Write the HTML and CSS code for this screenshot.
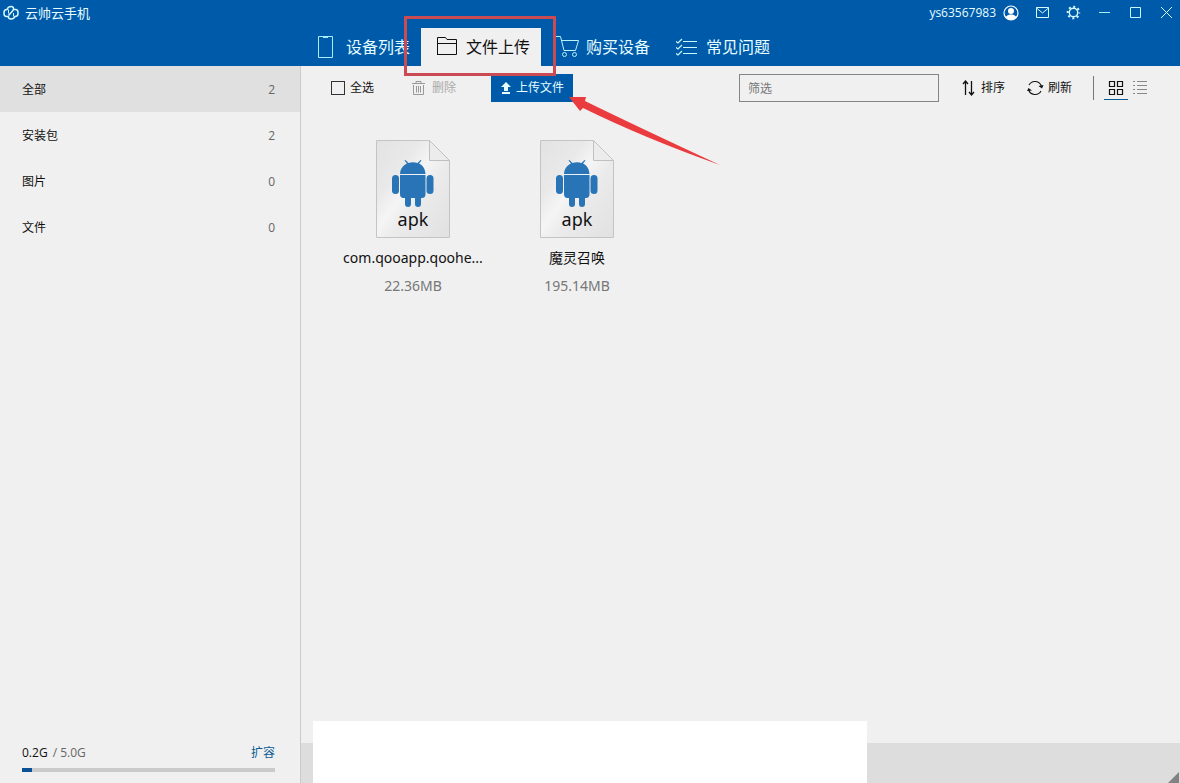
FILE: index.html
```html
<!DOCTYPE html>
<html lang="zh-CN">
<head>
<meta charset="utf-8">
<title>云帅云手机</title>
<link rel="stylesheet" href="styles.css">
</head>
<body>
<svg class="defs" aria-hidden="true">
  <defs>
    <linearGradient id="paper" x1="0" y1="0" x2="1" y2="1">
      <stop offset="0" stop-color="#e3e3e4"/>
      <stop offset="0.3" stop-color="#e9e9ea"/>
      <stop offset="0.46" stop-color="#f5f5f6"/>
      <stop offset="0.6" stop-color="#ebebec"/>
      <stop offset="1" stop-color="#e1e1e2"/>
    </linearGradient>
    <symbol id="apk-file" viewBox="0 0 74 98">
      <path d="M.5.5H53.500L73.500 20.500V97.500H.5Z" fill="url(#paper)" stroke="#c4c4c6"/>
      <path d="M53.500.5V20.500H73.500Z" fill="#ececed" stroke="#c0c0c2"/>
      <g fill="#2874b6">
        <path d="M24 34C24.500 28.500 27 25.500 31 23.500L28.500 20.500L29.500 20L32.500 23Q37 21.500 41.500 23L44.500 20L45.500 20.500L43 23.500C47 25.500 49 28.500 49.500 34Z"/>
        <path d="M24 35H49.500V54Q49.500 58 46 58H45V64Q45 67 42 67T39 64V58H35V64Q35 67 32 67T29 64V58H27.500Q24 58 24 54Z"/>
        <rect x="16" y="35" width="7" height="19" rx="3.500"/>
        <rect x="50.500" y="35" width="7" height="19" rx="3.500"/>
      </g>
    </symbol>
  </defs>
</svg>

<header class="header">
  <div class="titlebar">
    <h1 class="brand">
      <svg class="icon" width="16" height="16" viewBox="0 0 16 16" fill="none" stroke="#d4fbff" stroke-width="1.500">
        <path d="M5.500 11.500H3.500Q1 11.500 1 8.500V7.500Q1 4.500 4 4.500Q5 1.500 8 1.500Q11 1.500 10.500 4.500L9.500 6L5.500 10.500"/>
        <path d="M10.500 4.500H12.500Q15 4.500 15 7.500V8.500Q15 11.500 12 11.500Q11 14 8 14Q5 14 5.500 11"/>
        <path d="M5.500 4.500V8.500M10.500 8V11.500" stroke-width="1"/>
      </svg>
      云帅云手机
    </h1>
    <div class="window-tools">
      <button class="user" type="button">ys63567983
        <svg class="icon" width="16" height="16" viewBox="0 0 16 16">
          <circle cx="8" cy="8" r="7" fill="none" stroke="#fff" stroke-width="1.200"/>
          <circle cx="8" cy="6" r="3" fill="#fff"/>
          <path d="M2.500 12Q4 10 6.500 9.500H9.500Q12 10 13.500 12Q11.500 15 8 15T2.500 12Z" fill="#fff"/>
        </svg>
      </button>
      <button class="tool" type="button" aria-label="消息">
        <svg class="icon" width="15" height="15" viewBox="0 0 15 15" fill="none" stroke="#d4fbff"><path d="M1.500 2.500H13.500V12.500H1.500ZM1.500 3L7.500 8L13.500 3"/></svg>
      </button>
      <button class="tool" type="button" aria-label="设置">
        <svg class="icon" width="15" height="15" viewBox="0 0 15 15" fill="none" stroke="#d4fbff"><circle cx="7.500" cy="7.500" r="4.200" stroke-width="1.400"/><circle cx="7.500" cy="7.500" r="5.800" stroke-width="2" stroke-dasharray="2 2.555" stroke-dashoffset="1"/></svg>
      </button>
      <button class="tool" type="button" aria-label="最小化">
        <svg class="icon" width="15" height="15" viewBox="0 0 15 15" stroke="#a8f0f4"><path d="M2 7.500H13"/></svg>
      </button>
      <button class="tool" type="button" aria-label="最大化">
        <svg class="icon" width="15" height="15" viewBox="0 0 15 15" fill="none" stroke="#c4f8fb"><path d="M2.500 2.500H12.500V12.500H2.500Z"/></svg>
      </button>
      <button class="tool" type="button" aria-label="关闭">
        <svg class="icon" width="15" height="15" viewBox="0 0 15 15" stroke="#d4fbff"><path d="M2 2L13 13M13 2L2 13"/></svg>
      </button>
    </div>
  </div>
  <nav class="tabs">
    <a class="tab" href="#devices">
      <svg class="icon" width="24" height="24" viewBox="0 0 24 24" fill="none" stroke="#a8eef4"><path d="M2.500 1.500H16.500V22.500H2.500Z"/><path d="M7 2.500H12"/></svg>
      设备列表</a>
    <a class="tab tab-active" href="#upload" aria-current="page">
      <svg class="icon" width="24" height="24" viewBox="0 0 24 24" fill="none" stroke="#111"><path d="M1.500 20V2.500H9.500L11 4.500H20.500V19.500H1.500ZM1.500 8.500H20.500"/></svg>
      文件上传
      <span class="highlight-box"></span></a>
    <a class="tab" href="#buy">
      <svg class="icon" width="24" height="24" viewBox="0 0 24 24" fill="none" stroke="#b8f3f8"><path d="M0 1.500H4.500L8 15.500H19.500L22.500 5.500H5.500"/><circle cx="8.500" cy="19.500" r="2"/><circle cx="18.500" cy="19.500" r="2"/></svg>
      购买设备</a>
    <a class="tab" href="#faq">
      <svg class="icon" width="24" height="24" viewBox="0 0 24 24" fill="none" stroke="#c8f8fb"><path d="M7 6.500H21M7 12.500H21M7 18.500H21"/><path stroke-width="1.200" d="M-.5 6L2 8L6 4M-.5 12L2 14L6 10M-.5 18L2 20L6 16"/></svg>
      常见问题</a>
  </nav>
</header>

<div class="body">
  <aside class="sidebar">
    <ul class="categories">
      <li><a class="category category-active" href="#all">全部<span class="count">2</span></a></li>
      <li><a class="category" href="#packages">安装包<span class="count">2</span></a></li>
      <li><a class="category" href="#images">图片<span class="count">0</span></a></li>
      <li><a class="category" href="#files">文件<span class="count">0</span></a></li>
    </ul>
    <div class="storage">
      <div class="storage-row">
        <span class="quota">0.2G <span class="total">/ 5.0G</span></span>
        <a class="expand" href="#expand">扩容</a>
      </div>
      <div class="meter"><div class="meter-fill" style="width:4%"></div></div>
    </div>
  </aside>

  <main class="main">
    <div class="toolbar">
      <label class="select-all"><input class="checkbox" type="checkbox">全选</label>
      <button class="delete" type="button" disabled>
        <svg class="icon" width="15" height="16" viewBox="0 0 15 16" fill="none" stroke="#999"><path d="M1 3.500H14M5 3V1.500H10V3M2.500 5V14.500H12.500V5M5.500 6V12.500M7.500 6V12.500M9.500 6V12.500"/></svg>
        删除</button>
      <div class="upload-wrap">
        <button class="upload" type="button">
          <svg class="icon" width="12" height="12" viewBox="0 0 12 12" fill="#e4fdff"><path d="M6 0L11 5H8V9H4V5H1ZM2 10H10V12H2Z"/></svg>
          上传文件</button>
        <svg class="pointer" width="151" height="70" viewBox="0 0 151 70" fill="#ea3c3f"><path d="M0 0L17 0L16 4Q65 28 151 68Q75 41 14 11L11 14Z"/></svg>
      </div>
      <input class="filter" type="text" placeholder="筛选" aria-label="筛选">
      <button class="sort" type="button">
        <svg class="icon" width="14" height="16" viewBox="0 0 14 16" fill="none" stroke="#111" stroke-width="1.300"><path d="M3.500 15V1M1 4L3.500 1L6 4M9.500 1V15M7 12L9.500 15L12 12"/></svg>
        排序</button>
      <button class="refresh" type="button">
        <svg class="icon" width="17" height="16" viewBox="0 0 17 16" fill="none" stroke="#111" stroke-width="1.100"><path d="M2 5A6.800 6.800 0 0 1 14.500 6.500M14 11A6.800 6.800 0 0 1 1.500 9.500"/><path fill="#111" stroke="none" d="M0 11L1.500 8L5 10.500ZM16.500 5L15 8.500L11.500 6Z"/></svg>
        刷新</button>
      <div class="views">
        <button class="view view-active" type="button" aria-label="图标视图">
          <svg class="icon" width="16" height="16" viewBox="0 0 16 16" fill="none" stroke="#111" stroke-width="1.200"><path d="M1.500 1.500H6.500V6.500H1.500ZM9.500 1.500H14.500V6.500H9.500ZM1.500 9.500H6.500V14.500H1.500ZM9.500 9.500H14.500V14.500H9.500Z"/></svg>
        </button>
        <button class="view" type="button" aria-label="列表视图">
          <svg class="icon" width="16" height="16" viewBox="0 0 16 16" stroke="#888"><path d="M1 1.500H3M5 1.500H15M1 5.500H3M5 5.500H15M1 9.500H3M5 9.500H15M1 13.500H3M5 13.500H15"/></svg>
        </button>
      </div>
    </div>

    <ul class="files">
      <li class="file">
        <div class="file-icon"><svg class="paper" width="74" height="98"><use href="#apk-file"/></svg><span class="ext">apk</span></div>
        <span class="file-name">com.qooapp.qoohe...</span>
        <span class="file-size">22.36MB</span>
      </li>
      <li class="file">
        <div class="file-icon"><svg class="paper" width="74" height="98"><use href="#apk-file"/></svg><span class="ext">apk</span></div>
        <span class="file-name">魔灵召唤</span>
        <span class="file-size">195.14MB</span>
      </li>
    </ul>

    <footer class="statusbar">
      <div class="blank-panel"></div>
      <svg class="grip" width="12" height="12" viewBox="0 0 12 12"><path d="M11 1V12H0Z" fill="#828282"/></svg>
    </footer>
  </main>
</div>
</body>
</html>
```
FILE: styles.css
```css
* { box-sizing: border-box; }

body {
  margin: 0;
  min-height: 100vh;
  display: flex;
  flex-direction: column;
  background: #f0f0f0;
  color: #111;
  font: 12px/16px "Open Sans", "Noto Sans CJK SC", sans-serif;
  overflow: hidden;
}

button {
  padding: 0;
  border: 0;
  background: none;
  color: inherit;
  font: inherit;
  display: flex;
  align-items: center;
}

a { color: inherit; text-decoration: none; }
ul { list-style: none; margin: 0; padding: 0; }
.icon { flex: none; display: block; }
.defs { position: absolute; width: 0; height: 0; }

.header { background: #005aaa; color: #e4fdff; }

.titlebar {
  height: 26px;
  padding: 0 6px 1px 3px;
  display: flex;
  align-items: center;
  justify-content: space-between;
}

.brand {
  margin: 0;
  display: flex;
  align-items: center;
  gap: 6px;
  font-size: 13px;
  font-weight: 400;
}

.window-tools { display: flex; align-items: center; gap: 16px; }
.user { gap: 7px; }

.tabs { display: flex; height: 40px; padding: 2px 0 0 301px; }

.tab {
  position: relative;
  width: 120px;
  padding-left: 15px;
  display: flex;
  align-items: center;
  gap: 6px;
  font-size: 16px;
  white-space: nowrap;
}

.tab-active { background: #f0f0f0; color: #111; }

.highlight-box {
  position: absolute;
  z-index: 2;
  top: -12px;
  bottom: -10px;
  left: -17px;
  right: -15px;
  border: 3px solid #cb4b55;
}

.body { flex: 1; display: flex; }

.sidebar {
  width: 301px;
  display: flex;
  flex-direction: column;
  justify-content: space-between;
  border-right: 1px solid #cacaca;
}

.category {
  height: 46px;
  padding: 2px 25px 0 22px;
  display: flex;
  align-items: center;
  justify-content: space-between;
}

.category-active { background: #e0e0e0; }
.count { color: #666; }

.storage { padding: 0 25px 11px 22px; }
.storage-row { display: flex; justify-content: space-between; margin-bottom: 7px; }
.total { margin-left: 2px; color: #666; }
.expand { color: #0b5c94; }
.meter { height: 4px; background: #cacaca; }
.meter-fill { height: 4px; background: #0b5294; }

.main { flex: 1; min-width: 0; display: flex; flex-direction: column; }

.toolbar {
  height: 44px;
  padding: 0 28px 0 30px;
  display: flex;
  align-items: center;
  line-height: 18px;
}

.select-all { display: flex; align-items: center; gap: 5px; }

.checkbox {
  appearance: none;
  width: 14px;
  height: 14px;
  margin: 0;
  border: 1px solid #333;
}

.delete { gap: 6px; margin-left: 37px; color: #aaa; }
.upload-wrap { position: relative; margin-left: 35px; }

.upload {
  height: 28px;
  padding: 0 9px;
  gap: 4px;
  background: #005aaa;
  color: #e4fdff;
}

.pointer { position: absolute; z-index: 2; top: 23px; left: 78px; }

.filter {
  width: 200px;
  height: 28px;
  margin-left: auto;
  padding: 0 8px;
  border: 1px solid #858585;
  border-radius: 0;
  background: transparent;
  font: inherit;
}

.filter::placeholder { color: #777; }
.sort { gap: 5px; margin-left: 23px; }
.refresh { gap: 4px; margin-left: 22px; }

.views {
  display: flex;
  height: 24px;
  margin-left: 21px;
  padding-left: 10px;
  border-left: 1px solid #777;
}

.view { width: 24px; height: 24px; justify-content: center; }
.view-active { border-bottom: 1px solid #0b5c94; }

.files { flex: 1; display: flex; padding: 30px; }

.file {
  width: 164px;
  display: flex;
  flex-direction: column;
  align-items: center;
  font-family: "Noto Sans", "Noto Sans CJK SC", sans-serif;
  font-size: 14px;
  line-height: 20px;
}

.file-icon { position: relative; margin-bottom: 10px; }
.paper { display: block; }

.ext {
  position: absolute;
  left: 0;
  right: 0;
  bottom: 9px;
  text-align: center;
  font-size: 18px;
}

.file-name { margin-bottom: 8px; }
.file-size { color: #777; }

.statusbar { position: relative; height: 40px; background: #ddd; }

.blank-panel {
  position: absolute;
  left: 12px;
  bottom: 0;
  width: 63%;
  height: 62px;
  background: #fff;
}

.grip { position: absolute; right: 0; bottom: 0; }
```
